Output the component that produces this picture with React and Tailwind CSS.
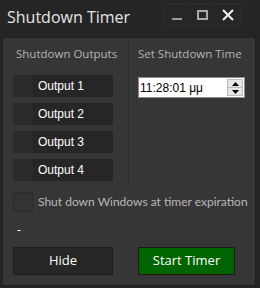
import React from 'react';

const outputs = ['Output 1', 'Output 2', 'Output 3', 'Output 4'];

const App = () => {
  return (
    <div className="w-[260px] h-[288px] bg-[#252525] flex flex-col font-['Open_Sans',sans-serif] overflow-hidden">
      {/* TITLE BAR */}
      <div className="h-[37px] flex items-start justify-between shrink-0">
        <div className="pl-[7px] pt-[6px] text-[16px] leading-[22px] text-[#e6e6e6]">Shutdown Timer</div>
        <div className="flex mt-[3px] mr-[19px] border border-[#2c2c2c] bg-[#262626]">
          <div className="w-[25px] h-[21px] flex items-end justify-center pb-[5px] border-r border-[#2c2c2c]">
            <div className="w-[10px] h-[2px] bg-[#9a9a9a]"></div>
          </div>
          <div className="w-[25px] h-[21px] flex items-center justify-center border-r border-[#2c2c2c]">
            <div className="w-[11px] h-[10px] border-2 border-[#a8a8a8]"></div>
          </div>
          <div className="w-[25px] h-[21px] flex items-center justify-center">
            <svg width="12" height="12" viewBox="0 0 12 12">
              <path d="M1 1 L11 11 M11 1 L1 11" stroke="#f0f0f0" strokeWidth="2" />
            </svg>
          </div>
        </div>
      </div>

      {/* BODY */}
      <div className="flex-1 ml-[2px] mr-[4px] mb-[2px] border border-[#202020] bg-[#363636] flex flex-col pl-[10px] pt-[8px]">
        <div className="flex">
          {/* Outputs column */}
          <div className="w-[100px] flex flex-col">
            <div className="pl-[3px] text-[11.5px] leading-[16px] text-[#b4b4b4] whitespace-nowrap">Shutdown Outputs</div>
            <div className="mt-[13px] flex flex-col gap-[6px]">
              {outputs.map((o) => (
                <div key={o} className="h-[22px] flex bg-[#262626]">
                  <div className="w-[20px] bg-[#2a2a2a]"></div>
                  <div className="flex-1 flex items-center pl-[5px] font-['Liberation_Sans',sans-serif] text-[12px] text-white">{o}</div>
                </div>
              ))}
            </div>
          </div>

          {/* separator */}
          <div className="ml-[15px] w-[1px] h-[142px] -mt-[5px] bg-[#2a2a2a]"></div>

          {/* Time column */}
          <div className="ml-[9px] flex flex-col">
            <div className="text-[11.5px] leading-[16px] text-[#b4b4b4] whitespace-nowrap">Set Shutdown Time</div>
            <div className="mt-[15px] w-[107px] h-[21px] bg-white border border-[#8c8c8c] flex items-center pl-[1px] pr-[1px]">
              <div className="flex-1 font-['Liberation_Sans',sans-serif] text-[12px] text-black leading-none">11:28:01 μμ</div>
              <div className="w-[16px] h-[17px] flex flex-col border border-[#bdbdbd] bg-[#e6e6e6]">
                <div className="flex-1 flex items-center justify-center border-b border-[#bdbdbd]">
                  <svg width="7" height="4" viewBox="0 0 7 4"><path d="M0 4 L3.5 0 L7 4 Z" fill="#000" /></svg>
                </div>
                <div className="flex-1 flex items-center justify-center">
                  <svg width="7" height="4" viewBox="0 0 7 4"><path d="M0 0 L7 0 L3.5 4 Z" fill="#000" /></svg>
                </div>
              </div>
            </div>
          </div>
        </div>

        {/* checkbox */}
        <div className="mt-[9px] flex items-center">
          <div className="shrink-0 w-[20px] h-[20px] bg-[#333333] border border-[#2c2c2c]"></div>
          <div className="ml-[5px] font-['Lato',sans-serif] text-[12px] leading-[18px] text-[#b8b8b8] whitespace-nowrap">Shut down Windows at timer expiration</div>
        </div>

        <div className="mt-[11px] pl-[4px] h-[14px] text-[12px] leading-[14px] text-white">-</div>

        {/* buttons */}
        <div className="mt-[10px] flex">
          <button className="w-[100px] h-[28px] bg-[#262626] border border-[#1c1c1c] text-white text-[13px]">Hide</button>
          <button className="ml-[25px] w-[97px] h-[28px] bg-[#006400] border border-[#1a1a1a] text-white text-[13px]">Start Timer</button>
        </div>
      </div>
    </div>
  );
};

export default App;
